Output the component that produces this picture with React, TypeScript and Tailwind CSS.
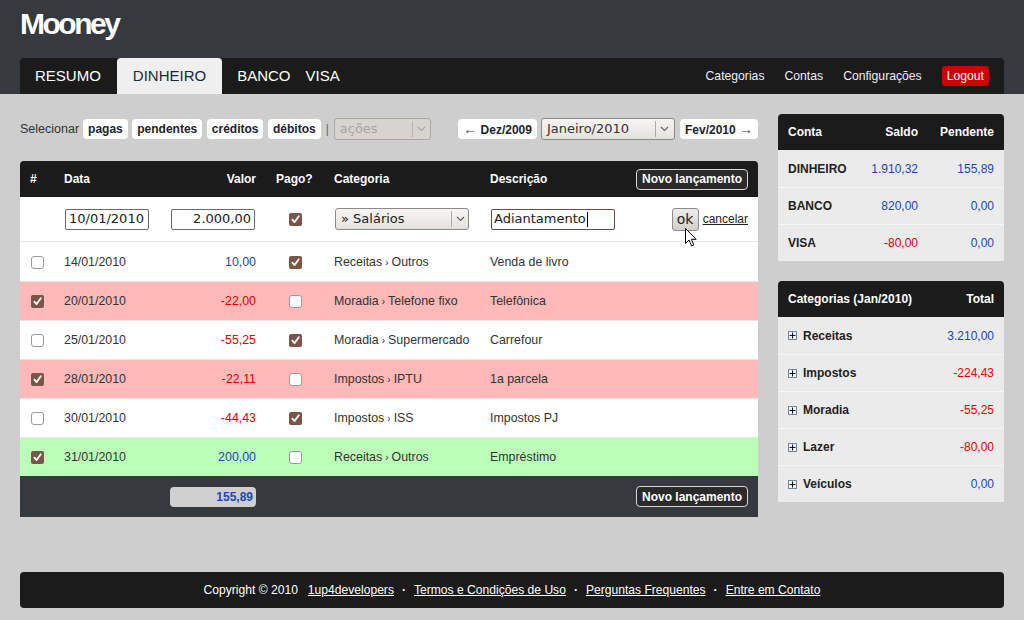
import React from "react";

type Row = {
  sel: boolean;
  date: string;
  val: string;
  neg: boolean;
  paid: boolean;
  cat: [string, string];
  desc: string;
  bg: string;
};

const rows: Row[] = [
  { sel: false, date: "14/01/2010", val: "10,00", neg: false, paid: true, cat: ["Receitas", "Outros"], desc: "Venda de livro", bg: "bg-white" },
  { sel: true, date: "20/01/2010", val: "-22,00", neg: true, paid: false, cat: ["Moradia", "Telefone fixo"], desc: "Telefônica", bg: "bg-[#ffb9b9]" },
  { sel: false, date: "25/01/2010", val: "-55,25", neg: true, paid: true, cat: ["Moradia", "Supermercado"], desc: "Carrefour", bg: "bg-white" },
  { sel: true, date: "28/01/2010", val: "-22,11", neg: true, paid: false, cat: ["Impostos", "IPTU"], desc: "1a parcela", bg: "bg-[#ffb9b9]" },
  { sel: false, date: "30/01/2010", val: "-44,43", neg: true, paid: true, cat: ["Impostos", "ISS"], desc: "Impostos PJ", bg: "bg-white" },
  { sel: true, date: "31/01/2010", val: "200,00", neg: false, paid: false, cat: ["Receitas", "Outros"], desc: "Empréstimo", bg: "bg-[#bcffb8]" },
];

const contas = [
  { name: "DINHEIRO", saldo: "1.910,32", neg: false, pend: "155,89" },
  { name: "BANCO", saldo: "820,00", neg: false, pend: "0,00" },
  { name: "VISA", saldo: "-80,00", neg: true, pend: "0,00" },
];

const categorias = [
  { name: "Receitas", total: "3.210,00", neg: false },
  { name: "Impostos", total: "-224,43", neg: true },
  { name: "Moradia", total: "-55,25", neg: true },
  { name: "Lazer", total: "-80,00", neg: true },
  { name: "Veículos", total: "0,00", neg: false },
];

const cols = "grid grid-cols-[34px_106px_106px_58px_156px_1fr] items-center";

function Check({ on }: { on?: boolean }) {
  if (on)
    return (
      <span className="inline-flex h-[13px] w-[13px] items-center justify-center rounded-[2px] bg-[#7a5548]">
        <svg viewBox="0 0 12 12" width="11" height="11">
          <path d="M2.6 6.2 L5 8.8 L9.6 2.4" fill="none" stroke="white" strokeWidth="2" strokeLinecap="round" strokeLinejoin="round" />
        </svg>
      </span>
    );
  return <span className="inline-block h-[13px] w-[13px] rounded-[3px] border border-[#9a9a9a] bg-white" />;
}

function Chevron({ color = "#666" }: { color?: string }) {
  return (
    <svg width="9" height="6" viewBox="0 0 9 6">
      <path d="M1 1 L4.5 4.5 L8 1" fill="none" stroke={color} strokeWidth="1.2" />
    </svg>
  );
}

function NovoBtn() {
  return (
    <button className="h-[21px] rounded-[4px] border border-[#d8d8d8] bg-[#2a2a2a] px-[5px] text-[12px] font-bold text-white">
      Novo lançamento
    </button>
  );
}

function Plus() {
  return (
    <span className="flex h-[9px] w-[9px] items-center justify-center border border-[#6f88a6] bg-[#f3f5f8]">
      <svg width="7" height="7" viewBox="0 0 7 7">
        <path d="M0.5 3.5 H6.5 M3.5 0.5 V6.5" stroke="#111" strokeWidth="1" />
      </svg>
    </span>
  );
}

export default function App() {
  return (
    <div className="min-h-[620px] bg-[#cecece] font-['Liberation_Sans',Arial,sans-serif] text-[#333]">
      <header className="bg-[#36393e] px-[20px]">
        <h1 className="h-[58px] pt-[9px] text-[30px] font-bold leading-[30px] tracking-[-2.5px] text-white">Mooney</h1>
        <nav className="flex h-[36px] items-stretch rounded-t-[4px] bg-[#1b1b1b] text-white">
          <a className="flex items-center pl-[15px] pr-[16px] text-[15px]">RESUMO</a>
          <a className="flex items-center rounded-t-[4px] bg-[#efefef] px-[16px] text-[15px] text-[#1c2a3a]">DINHEIRO</a>
          <a className="ml-[15px] flex items-center text-[15px]">BANCO</a>
          <a className="ml-[15px] flex items-center text-[15px]">VISA</a>
          <div className="ml-auto flex items-center gap-[20px] pr-[15px] text-[12.2px] text-[#eee]">
            <a>Categorias</a>
            <a>Contas</a>
            <a>Configurações</a>
            <a className="rounded-[3px] bg-[#cc0000] px-[5px] py-[1px] text-white">Logout</a>
          </div>
        </nav>
      </header>

      <main className="flex gap-[20px] px-[20px]">
        <div className="w-[738px]">
          {/* barra de ações */}
          <div className="mt-[24px] flex h-[22px] items-center text-[12px]">
            <span className="mr-[4px] text-[12.5px]">Selecionar</span>
            {["pagas", "pendentes", "créditos", "débitos"].map((b, i) => (
              <button key={b} className={`${i === 0 ? "" : "ml-[4.5px]"} h-[20px] rounded-[4px] bg-white px-[5px] font-bold text-[#1e2230]`}>
                {b}
              </button>
            ))}
            <span className="mx-[5px] text-[#666]">|</span>
            <div className="flex h-[22px] w-[97px] items-center rounded-[3px] border border-[#aaa7a2] bg-[#d7d4cf] font-['DejaVu_Sans',sans-serif] text-[13px] text-[#a9a6a1]">
              <span className="flex-1 pl-[5px]">ações</span>
              <span className="flex h-[16px] w-[18px] items-center justify-center border-l border-[#b8b5b0]">
                <Chevron color="#aaa" />
              </span>
            </div>

            <div className="ml-auto flex items-center">
              <button className="mr-[4px] h-[20px] rounded-[4px] bg-white px-[5px] font-bold text-[#1e2230]">
                <span className="text-[14px] font-normal text-[#444]">←</span> Dez/2009
              </button>
              <div className="flex h-[22px] w-[134px] items-center rounded-[3px] border border-[#8a8a8a] bg-gradient-to-b from-[#f7f6f4] to-[#e4e1dd] font-['DejaVu_Sans',sans-serif] text-[13px] text-[#333]">
                <span className="flex-1 pl-[5px]">Janeiro/2010</span>
                <span className="flex h-[16px] w-[19px] items-center justify-center border-l border-[#aaa]">
                  <Chevron />
                </span>
              </div>
              <button className="ml-[5px] h-[20px] rounded-[4px] bg-white px-[5px] font-bold text-[#1e2230]">
                Fev/2010 <span className="text-[14px] font-normal text-[#444]">→</span>
              </button>
            </div>
          </div>

          {/* tabela de lançamentos */}
          <div className="mt-[21px] overflow-hidden rounded-t-[4px] text-[12.4px]">
            <div className={`${cols} h-[36px] bg-[#1b1b1b] text-[12px] font-bold text-white`}>
              <span className="pl-[10px]">#</span>
              <span className="pl-[10px]">Data</span>
              <span className="pr-[10px] text-right">Valor</span>
              <span className="pl-[10px]">Pago?</span>
              <span className="pl-[10px]">Categoria</span>
              <div className="flex items-center pl-[10px] pr-[10px]">
                <span>Descrição</span>
                <span className="ml-auto">
                  <NovoBtn />
                </span>
              </div>
            </div>

            <div className={`${cols} h-[45px] border-b border-[#e6e6e6] bg-white font-['DejaVu_Sans',sans-serif] text-[13px] text-[#222]`}>
              <span />
              <div className="pl-[11px]">
                <div className="flex h-[21px] w-[84px] items-center rounded-[2px] border border-[#6b6b6b] px-[3px]">10/01/2010</div>
              </div>
              <div className="flex justify-end pr-[11px]">
                <div className="flex h-[21px] w-[84px] items-center justify-end rounded-[2px] border border-[#6b6b6b] px-[3px]">2.000,00</div>
              </div>
              <div className="flex pl-[23px]">
                <Check on />
              </div>
              <div className="pl-[11px]">
                <div className="flex h-[22px] w-[134px] items-center rounded-[3px] border border-[#8a8a8a] bg-gradient-to-b from-[#f7f6f4] to-[#e4e1dd]">
                  <span className="flex-1 pl-[5px]">» Salários</span>
                  <span className="flex h-[16px] w-[17px] items-center justify-center border-l border-[#aaa]">
                    <Chevron />
                  </span>
                </div>
              </div>
              <div className="flex items-center pl-[11px] pr-[10px]">
                <div className="flex h-[21px] w-[124px] items-center rounded-[2px] border border-[#6b4a42] px-[2px]">
                  Adiantamento<span className="ml-[1px] inline-block h-[15px] w-px bg-black" />
                </div>
                <div className="relative ml-auto">
                  <button className="h-[23px] w-[27px] rounded-[3px] border border-[#8c8c8c] bg-gradient-to-b from-[#eeece9] to-[#d3d0cb] text-[14px] text-[#222]">ok</button>
                  <svg className="absolute left-[13px] top-[20px]" width="13" height="20" viewBox="0 0 13 20">
                    <path d="M0.5 0.5 L0.5 15.5 L4 12 L6.6 18 L8.8 17 L6.3 11.3 L11.2 11.3 Z" fill="white" stroke="black" strokeWidth="1" strokeLinejoin="round" />
                  </svg>
                </div>
                <a className="ml-[4px] font-['Liberation_Sans',Arial,sans-serif] text-[12px] text-[#222] underline">cancelar</a>
              </div>
            </div>

            {rows.map((r, i) => (
              <div key={i} className={`${cols} h-[39px] pt-px ${i > 0 ? "border-t border-[#e6e6e6]" : ""} ${r.bg}`}>
                <div className="flex pl-[11px]">
                  <Check on={r.sel} />
                </div>
                <span className="pl-[10px]">{r.date}</span>
                <span className={`pr-[10px] text-right ${r.neg ? "text-[#e00000]" : "text-[#2147b5]"}`}>{r.val}</span>
                <div className="flex pl-[23px]">
                  <Check on={r.paid} />
                </div>
                <span className="pl-[10px]">
                  {r.cat[0]}
                  <span className="mx-[3px] text-[10px]">›</span>
                  {r.cat[1]}
                </span>
                <span className="pl-[10px]">{r.desc}</span>
              </div>
            ))}

            <div className={`${cols} h-[41px] bg-[#36393e] text-[12px]`}>
              <span />
              <span />
              <div className="flex justify-end pr-[10px]">
                <span className="flex h-[20px] w-[86px] items-center justify-end rounded-[4px] bg-[#cfcfcf] pr-[3px] font-bold text-[#2147b5]">155,89</span>
              </div>
              <span />
              <span />
              <div className="flex justify-end pr-[10px]">
                <NovoBtn />
              </div>
            </div>
          </div>
        </div>

        <aside className="w-[226px] text-[12px]">
          <div className="mt-[20px] overflow-hidden rounded-t-[4px] bg-[#ebebeb]">
            <div className="grid h-[36px] grid-cols-[82px_68px_76px] items-center bg-[#1b1b1b] font-bold text-white">
              <span className="pl-[10px]">Conta</span>
              <span className="pr-[10px] text-right">Saldo</span>
              <span className="pr-[10px] text-right">Pendente</span>
            </div>
            {contas.map((c, i) => (
              <div key={c.name} className={`grid h-[37px] grid-cols-[82px_68px_76px] items-center ${i > 0 ? "border-t border-[#f6f6f6]" : ""}`}>
                <span className="pl-[10px] font-bold text-[#222]">{c.name}</span>
                <span className={`pr-[10px] text-right ${c.neg ? "text-[#e00000]" : "text-[#2147b5]"}`}>{c.saldo}</span>
                <span className="pr-[10px] text-right text-[#2147b5]">{c.pend}</span>
              </div>
            ))}
          </div>

          <div className="mt-[20px] overflow-hidden rounded-t-[4px] bg-[#ebebeb]">
            <div className="flex h-[36px] items-center justify-between bg-[#1b1b1b] px-[10px] font-bold text-white">
              <span>Categorias (Jan/2010)</span>
              <span>Total</span>
            </div>
            {categorias.map((c, i) => (
              <div key={c.name} className={`flex h-[37px] items-center px-[10px] ${i > 0 ? "border-t border-[#f6f6f6]" : ""}`}>
                <Plus />
                <span className="ml-[6px] font-bold text-[#222]">{c.name}</span>
                <span className={`ml-auto ${c.neg ? "text-[#e00000]" : "text-[#2147b5]"}`}>{c.total}</span>
              </div>
            ))}
          </div>
        </aside>
      </main>

      <div className="pb-[12px] pt-[55px]">
        <footer className="mx-[20px] flex h-[36px] items-center justify-center rounded-[4px] bg-[#1b1b1b] text-[12.1px] text-white">
          <span className="mr-[10px]">Copyright © 2010</span>
          <a className="underline">1up4developers</a>
          <span className="mx-[8px] font-bold">·</span>
          <a className="underline">Termos e Condições de Uso</a>
          <span className="mx-[8px] font-bold">·</span>
          <a className="underline">Perguntas Frequentes</a>
          <span className="mx-[8px] font-bold">·</span>
          <a className="underline">Entre em Contato</a>
        </footer>
      </div>
    </div>
  );
}
